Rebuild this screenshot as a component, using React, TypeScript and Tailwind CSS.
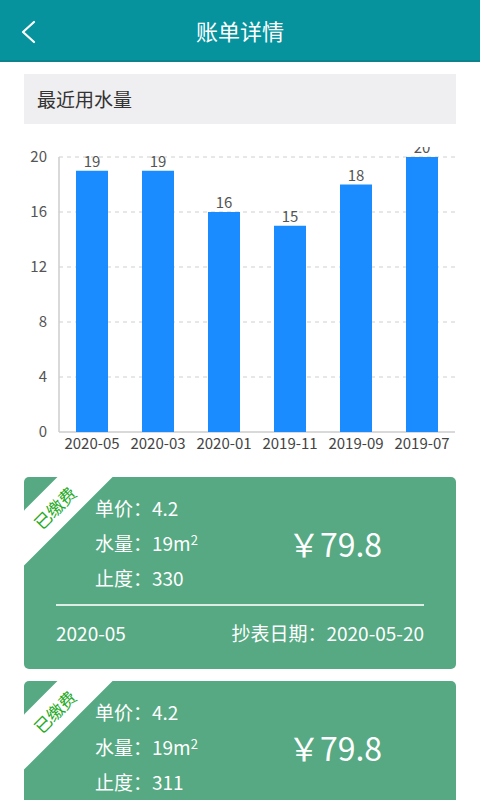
import React from "react";

const FONT = { fontFamily: '"Noto Sans CJK SC", "Noto Sans", sans-serif' };

const usage = [
  { month: "2020-05", value: 19 },
  { month: "2020-03", value: 19 },
  { month: "2020-01", value: 16 },
  { month: "2019-11", value: 15 },
  { month: "2019-09", value: 18 },
  { month: "2019-07", value: 20 },
];

const bills = [
  { price: "4.2", amount: "19", reading: "330", total: "79.8", month: "2020-05", date: "2020-05-20" },
  { price: "4.2", amount: "19", reading: "311", total: "79.8", month: "2020-03", date: "2020-03-20" },
];

// chart geometry (svg coords)
const X0 = 59;
const X1 = 455;
const TOP = 10;
const BOTTOM = 285;
const MAX = 20;
const y = (v: number) => BOTTOM - ((BOTTOM - TOP) * v) / MAX;

function UsageChart() {
  const slot = (X1 - X0) / usage.length;
  return (
    <svg width="480" height="318" className="block" style={FONT}>
      {[0, 4, 8, 12, 16, 20].map((t) => (
        <g key={t}>
          {t > 0 && (
            <line x1={X0} x2={X1} y1={y(t)} y2={y(t)} stroke="#cfcfcf" strokeWidth="1" strokeDasharray="4 4" />
          )}
          <text x="47" y={y(t) + 5} textAnchor="end" fontSize="15" fill="#555">
            {t}
          </text>
        </g>
      ))}
      <line x1={X0} x2={X0} y1={TOP} y2={BOTTOM} stroke="#cccccc" strokeWidth="1.5" />
      <line x1={X0} x2={X1} y1={BOTTOM} y2={BOTTOM} stroke="#cccccc" strokeWidth="1.5" />
      {usage.map((d, i) => {
        const cx = X0 + slot * i + slot / 2;
        return (
          <g key={d.month}>
            <rect x={cx - 16} y={y(d.value)} width="32" height={BOTTOM - y(d.value)} fill="#1a8cff" />
            <text x={cx} y={y(d.value) - 4} textAnchor="middle" fontSize="15" fill="#555">
              {d.value}
            </text>
            <text x={cx} y="302" textAnchor="middle" fontSize="15" fill="#444">
              {d.month}
            </text>
          </g>
        );
      })}
    </svg>
  );
}

function BillCard({ bill }: { bill: (typeof bills)[number] }) {
  return (
    <div className="relative overflow-hidden rounded-[5px] bg-[#56a982] px-8 text-[19px] text-white">
      {/* paid ribbon */}
      <div className="absolute left-[-50px] top-[11px] flex h-[39px] w-[161px] -rotate-45 items-center justify-center bg-white text-[17px] text-[#1eaa1e]">
        已缴费
      </div>
      <div className="flex pt-[13px] pb-[9px]">
        <div className="w-[190px] pl-[39px] leading-[35px]">
          <div>单价：{bill.price}</div>
          <div>
            水量：{bill.amount}m<sup className="text-[13px]">2</sup>
          </div>
          <div>止度：{bill.reading}</div>
        </div>
        <div className="flex flex-1 items-center justify-center text-[32px]">￥79.8</div>
      </div>
      <div className="h-[2px] bg-white/80" />
      <div className="flex items-center justify-between pt-[13px] pb-[22px] leading-[28px]">
        <span>{bill.month}</span>
        <span>抄表日期：{bill.date}</span>
      </div>
    </div>
  );
}

export default function App() {
  return (
    <div className="h-[800px] w-[480px] overflow-hidden bg-white" style={FONT}>
      <div className="relative flex h-[62px] items-center justify-center border-b-2 border-[#0b838c] bg-[#06939d]">
        <svg className="absolute left-[19px] top-[19px]" width="20" height="26" viewBox="0 0 20 26">
          <path d="M15 3 L4 13 L15 23" fill="none" stroke="white" strokeWidth="2.2" strokeLinecap="round" strokeLinejoin="round" />
        </svg>
        <span className="text-[22px] text-white">账单详情</span>
      </div>
      <div className="px-6 pt-3">
        <div className="flex h-[50px] items-center bg-[#efeef0] pl-[13px] text-[19px] text-[#333]">最近用水量</div>
      </div>
      <div className="mt-[23px]">
        <UsageChart />
      </div>
      <div className="flex flex-col gap-[12px] px-6 pt-3">
        {bills.map((b, i) => (
          <BillCard key={i} bill={b} />
        ))}
      </div>
    </div>
  );
}
